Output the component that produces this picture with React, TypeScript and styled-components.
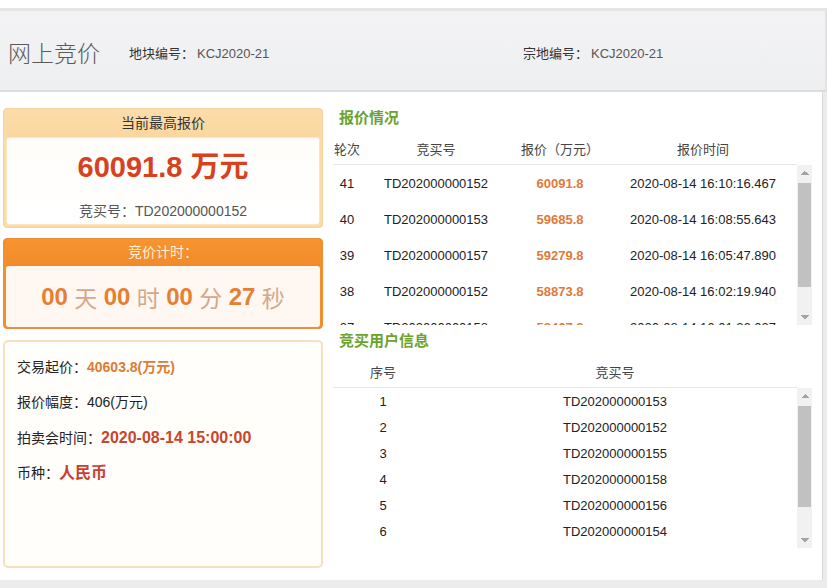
import React from 'react';
import styled, { createGlobalStyle, css } from 'styled-components';

const GlobalStyle = createGlobalStyle`
  html, body {
    margin: 0;
    padding: 0;
    background: #ececec;
  }
  body {
    font-family: "Liberation Sans", "Noto Sans CJK SC", sans-serif;
    color: #222;
  }
  * { box-sizing: border-box; }
`;

const Page = styled.div`
  width: 827px;
  height: 588px;
  overflow: hidden;
  background: #ececec;
`;

const TopStrip = styled.div`
  height: 8px;
  background: #fff;
`;

const Header = styled.header`
  height: 84px;
  display: flex;
  align-items: center;
  border-top: 3px solid #e4e4e4;
  border-bottom: 2px solid #dcdcdc;
  border-right: 2px solid #e2e2e2;
  background: linear-gradient(#f3f3f5, #eeeff1);
  padding: 3px 0 0 8px;
`;

const Title = styled.h1`
  margin: 0;
  font-size: 23px;
  font-weight: 300;
  color: #5a5a5a;
  width: 121px;
`;

const Meta = styled.div<{ $width?: number }>`
  font-size: 13px;
  color: #333;
  width: ${(p) => (p.$width ? `${p.$width}px` : 'auto')};
  span {
    color: #555;
    margin-left: 3px;
  }
`;

const Main = styled.main`
  width: 823px;
  height: 488px;
  background: #fff;
  border-right: 1px solid #dcdcdc;
  display: flex;
  gap: 10px;
  padding: 16px 0 0 3px;
`;

const LeftCol = styled.div`
  width: 320px;
  display: flex;
  flex-direction: column;
`;

const Card = styled.section<{ $tone: 'peach' | 'orange' }>`
  border: 1px solid ${(p) => (p.$tone === 'peach' ? '#f4d29b' : '#ec8d3a')};
  border-radius: 4px;
  background: ${(p) => (p.$tone === 'peach' ? '#fbdba8' : '#f58f2e')};
  padding: 0 2px ${(p) => (p.$tone === 'peach' ? '2px' : '1px')};
  ${(p) =>
    p.$tone === 'orange' &&
    css`
      margin-top: 10px;
    `}
`;

const CardHead = styled.div<{ $tone: 'peach' | 'orange' }>`
  height: ${(p) => (p.$tone === 'peach' ? '28px' : '27px')};
  line-height: ${(p) => (p.$tone === 'peach' ? '28px' : '27px')};
  text-align: center;
  font-size: 14px;
  color: ${(p) => (p.$tone === 'peach' ? '#333' : '#fff1d6')};
  background: ${(p) =>
    p.$tone === 'peach' ? 'linear-gradient(#fcdcaa, #fad7a0)' : 'linear-gradient(#f79530, #f28a2a)'};
`;

const PriceBody = styled.div`
  height: 88px;
  background: linear-gradient(#fffdf9, #fff);
  border: 1px solid #fbe5c2;
  border-radius: 3px;
  display: flex;
  flex-direction: column;
  align-items: center;
  padding-top: 11px;
`;

const BigPrice = styled.div`
  font-size: 29px;
  line-height: 36px;
  font-weight: bold;
  color: #d7411f;
`;

const Bidder = styled.div`
  margin-top: 16px;
  font-size: 14px;
  line-height: 20px;
  color: #555;
`;

const TimerBody = styled.div`
  height: 61px;
  background: #fff7f1;
  border-radius: 3px;
  display: flex;
  align-items: center;
  justify-content: center;
  font-size: 23px;
  color: #d3a88c;
  white-space: pre;
  b {
    font-size: 24px;
    color: #e58033;
  }
`;

const InfoCard = styled.section`
  margin-top: 11px;
  height: 228px;
  border: 2px solid #f3e2bd;
  border-radius: 5px;
  background: #fffefb;
  padding: 8px 12px;
`;

const InfoLine = styled.div`
  height: 35px;
  line-height: 35px;
  font-size: 14px;
  color: #222;
`;

const Strong = styled.b<{ $color: string; $size: number }>`
  color: ${(p) => p.$color};
  font-size: ${(p) => p.$size}px;
`;

const RightCol = styled.div`
  width: 479px;
  display: flex;
  flex-direction: column;
`;

const SectionTitle = styled.h2<{ $first?: boolean }>`
  margin: ${(p) => (p.$first ? '0' : '6px')} 0 5px 6px;
  height: 20px;
  line-height: 20px;
  font-size: 15px;
  font-weight: bold;
  color: #6ba32e;
`;

const Row = styled.div<{ $cols: string; $h: number; $head?: boolean }>`
  display: grid;
  grid-template-columns: ${(p) => p.$cols};
  height: ${(p) => p.$h}px;
  flex-shrink: 0;
  align-items: center;
  font-size: 13px;
  color: ${(p) => (p.$head ? '#444' : '#222')};
  ${(p) =>
    p.$head &&
    css`
      width: 464px;
      border-bottom: 1px solid #e6e6e6;
    `}
  & > * {
    text-align: center;
    white-space: nowrap;
  }
`;

const Price = styled.span`
  font-weight: bold;
  color: #e07a3a;
`;

const ScrollFrame = styled.div`
  height: 160px;
  display: flex;
`;

const ScrollList = styled.div`
  width: 464px;
  height: 160px;
  overflow: hidden;
  display: flex;
  flex-direction: column;
`;

const ScrollBar = styled.div`
  width: 15px;
  height: 160px;
  background: #f1f1f1;
  display: flex;
  flex-direction: column;
`;

const ArrowButton = styled.div<{ $dir: 'up' | 'down' }>`
  height: 16px;
  flex-shrink: 0;
  background: ${(p) =>
    p.$dir === 'up'
      ? 'conic-gradient(from 135deg at 50% 0, #a3a3a3 0 90deg, transparent 0deg) center / 8px 4px no-repeat'
      : 'conic-gradient(from -45deg at 50% 100%, #a3a3a3 0 90deg, transparent 0deg) center / 8px 4px no-repeat'};
`;

const Track = styled.div`
  flex: 1;
  padding: 0 1px;
`;

const Thumb = styled.div<{ $top: number; $size: number }>`
  margin-top: ${(p) => p.$top}px;
  height: ${(p) => p.$size}px;
  background: #c1c1c1;
`;

const Scroller: React.FC<{ thumbTop: number; thumbSize: number; children: React.ReactNode }> = ({
  thumbTop,
  thumbSize,
  children,
}) => (
  <ScrollFrame>
    <ScrollList>{children}</ScrollList>
    <ScrollBar>
      <ArrowButton $dir="up" />
      <Track>
        <Thumb $top={thumbTop} $size={thumbSize} />
      </Track>
      <ArrowButton $dir="down" />
    </ScrollBar>
  </ScrollFrame>
);

const bidCols = '28px 150px 98px 188px';
const userCols = '100px 364px';

const bids = [
  { round: 41, id: 'TD202000000152', price: '60091.8', time: '2020-08-14 16:10:16.467' },
  { round: 40, id: 'TD202000000153', price: '59685.8', time: '2020-08-14 16:08:55.643' },
  { round: 39, id: 'TD202000000157', price: '59279.8', time: '2020-08-14 16:05:47.890' },
  { round: 38, id: 'TD202000000152', price: '58873.8', time: '2020-08-14 16:02:19.940' },
  { round: 37, id: 'TD202000000158', price: '58467.8', time: '2020-08-14 16:01:36.037' },
];

const users = [
  'TD202000000153',
  'TD202000000152',
  'TD202000000155',
  'TD202000000158',
  'TD202000000156',
  'TD202000000154',
];

const App: React.FC = () => {
  return (
    <Page>
      <GlobalStyle />
      <TopStrip />
      <Header>
        <Title>网上竞价</Title>
        <Meta $width={394}>
          地块编号：<span>KCJ2020-21</span>
        </Meta>
        <Meta>
          宗地编号：<span>KCJ2020-21</span>
        </Meta>
      </Header>

      <Main>
        <LeftCol>
          <Card $tone="peach">
            <CardHead $tone="peach">当前最高报价</CardHead>
            <PriceBody>
              <BigPrice>60091.8 万元</BigPrice>
              <Bidder>竞买号：TD202000000152</Bidder>
            </PriceBody>
          </Card>

          <Card $tone="orange">
            <CardHead $tone="orange">竞价计时：</CardHead>
            <TimerBody>
              <b>00</b> 天 <b>00</b> 时 <b>00</b> 分 <b>27</b> 秒
            </TimerBody>
          </Card>

          <InfoCard>
            <InfoLine>
              交易起价：<Strong $color="#de7b35" $size={14}>40603.8(万元)</Strong>
            </InfoLine>
            <InfoLine>报价幅度：406(万元)</InfoLine>
            <InfoLine>
              拍卖会时间：<Strong $color="#c8462b" $size={16}>2020-08-14 15:00:00</Strong>
            </InfoLine>
            <InfoLine>
              币种：<Strong $color="#c8412f" $size={16}>人民币</Strong>
            </InfoLine>
          </InfoCard>
        </LeftCol>

        <RightCol>
          <SectionTitle $first>报价情况</SectionTitle>
          <Row $cols={bidCols} $h={32} $head>
            <span>轮次</span>
            <span>竞买号</span>
            <span>报价（万元）</span>
            <span>报价时间</span>
          </Row>
          <Scroller thumbTop={2} thumbSize={104}>
            {bids.map((b) => (
              <Row key={b.round} $cols={bidCols} $h={36}>
                <span>{b.round}</span>
                <span>{b.id}</span>
                <Price>{b.price}</Price>
                <span>{b.time}</span>
              </Row>
            ))}
          </Scroller>

          <SectionTitle>竞买用户信息</SectionTitle>
          <Row $cols={userCols} $h={32} $head>
            <span>序号</span>
            <span>竞买号</span>
          </Row>
          <Scroller thumbTop={2} thumbSize={101}>
            {users.map((u, i) => (
              <Row key={u} $cols={userCols} $h={26}>
                <span>{i + 1}</span>
                <span>{u}</span>
              </Row>
            ))}
          </Scroller>
        </RightCol>
      </Main>
    </Page>
  );
};

export default App;
